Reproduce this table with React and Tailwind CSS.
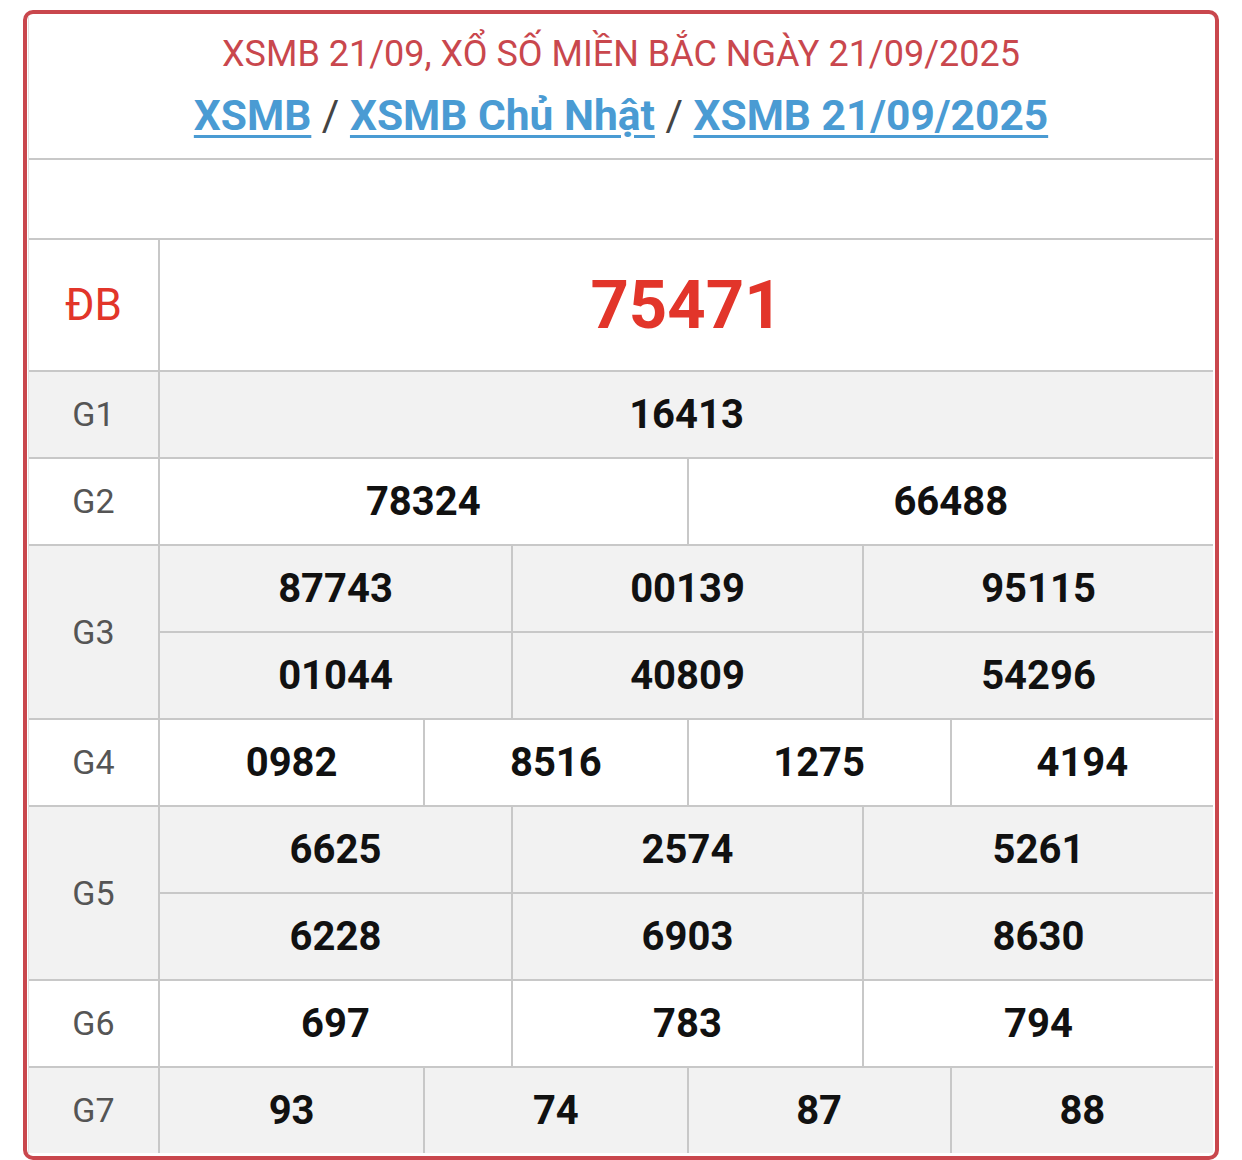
import React from "react";

const F = { fontFamily: "Roboto, 'Noto Sans', sans-serif" };

function Label({ children, red }) {
  return (
    <div
      className={
        "w-[131px] shrink-0 border-r-2 border-[#c8c8c8] flex items-center justify-center " +
        (red ? "text-[44px] text-[#e2352a]" : "text-[34px] text-[#555555]")
      }
    >
      {children}
    </div>
  );
}

function Cells({ nums, cols }) {
  const gridCls =
    cols === 1 ? "grid-cols-1" : cols === 2 ? "grid-cols-2" : cols === 3 ? "grid-cols-3" : "grid-cols-4";
  return (
    <div className={"flex-1 grid " + gridCls}>
      {nums.map((n, i) => (
        <div
          key={i}
          className={
            "h-[85px] flex items-center justify-center text-[40px] font-bold text-[#111111] " +
            (i % cols !== 0 ? "border-l-2 border-[#c8c8c8] " : "") +
            (i >= cols ? "border-t-2 border-[#c8c8c8] h-[87px]" : "")
          }
        >
          {n}
        </div>
      ))}
    </div>
  );
}

function Row({ label, nums, cols, gray }) {
  return (
    <div className={"flex border-t-2 border-[#c8c8c8] " + (gray ? "bg-[#f2f2f2]" : "bg-white")}>
      <Label>{label}</Label>
      <Cells nums={nums} cols={cols} />
    </div>
  );
}

export default function App() {
  return (
    <div className="bg-white w-[1242px] h-[1160px] pt-[10px] pl-[23px]" style={F}>
      <div className="w-[1196px] h-[1150px] border-4 border-[#c9474d] rounded-[10px] overflow-hidden">
        <div className="h-full flex flex-col ml-[1px] mr-[2px] border-l border-[#e2e2e2]">
          <div className="h-[144px] flex flex-col items-center pt-[17px]">
            <div className="text-[36px] leading-[46px] text-[#c9474d]">
              XSMB 21/09, XỔ SỐ MIỀN BẮC NGÀY 21/09/2025
            </div>
            <div className="mt-[14px] text-[42.5px] leading-[50px] font-bold text-[#444444]">
              <a className="text-[#4a9bd3] underline decoration-[3px] underline-offset-[5px]">XSMB</a>
              <span className="font-normal"> / </span>
              <a className="text-[#4a9bd3] underline decoration-[3px] underline-offset-[5px]">XSMB Chủ Nhật</a>
              <span className="font-normal"> / </span>
              <a className="text-[#4a9bd3] underline decoration-[3px] underline-offset-[5px]">XSMB 21/09/2025</a>
            </div>
          </div>
          <div className="h-[80px] border-t-2 border-[#c8c8c8]"></div>
          <div className="flex border-t-2 border-[#c8c8c8] h-[132px]">
            <Label red>ĐB</Label>
            <div className="flex-1 flex items-center justify-center text-[67px] font-bold text-[#e2352a]">
              75471
            </div>
          </div>
          <Row label="G1" nums={["16413"]} cols={1} gray />
          <Row label="G2" nums={["78324", "66488"]} cols={2} />
          <Row label="G3" nums={["87743", "00139", "95115", "01044", "40809", "54296"]} cols={3} gray />
          <Row label="G4" nums={["0982", "8516", "1275", "4194"]} cols={4} />
          <Row label="G5" nums={["6625", "2574", "5261", "6228", "6903", "8630"]} cols={3} gray />
          <Row label="G6" nums={["697", "783", "794"]} cols={3} />
          <Row label="G7" nums={["93", "74", "87", "88"]} cols={4} gray />
        </div>
      </div>
    </div>
  );
}
